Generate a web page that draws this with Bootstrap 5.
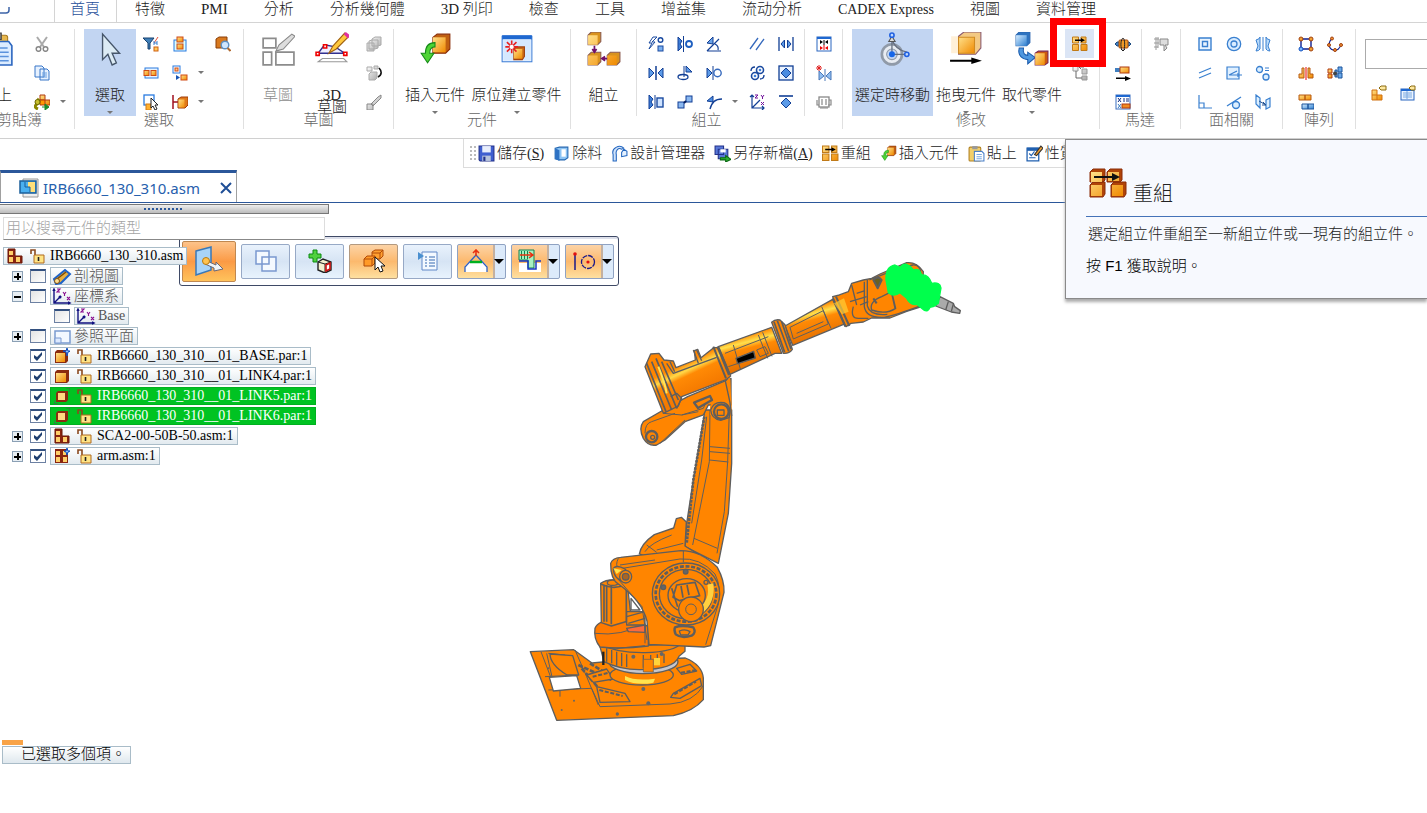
<!DOCTYPE html>
<html lang="zh-Hant">
<head>
<meta charset="utf-8">
<meta name="viewport" content="width=device-width, initial-scale=1">
<title>IRB6660_130_310.asm</title>
<link href="https://cdn.jsdelivr.net/npm/bootstrap@5.3.0/dist/css/bootstrap.min.css" rel="stylesheet">
<style>
body{font-family:"Liberation Serif","Noto Sans CJK TC",serif;font-size:15px;line-height:18px;font-weight:300;color:#222;background:#fff;overflow:hidden}
button{font:inherit;color:inherit;background:none;border:0;padding:0}
svg{display:block;flex:none}
.latin{font-size:14px;font-weight:400}
/* ribbon tabs */
.rtabs{height:23px;border-bottom:1px solid #d4d4d4}
.rtabs .nav-link{padding:0 18px 4px;color:#222;line-height:19px;white-space:nowrap}
.rtabs .nav-link.active{padding:0 16px 4px 15px;color:#1f4e9a;background:#fff;border:solid #d4d4d4;border-width:0 1px}
.appbtn{width:54px}
/* ribbon */
.ribbon{height:116px;padding-top:6px;border-bottom:1px solid #d0d0d0}
.rgroup{border-right:1px solid #e0e0e0;height:100px;display:flex;flex-direction:column;flex:none}
.rbody{height:87px;display:flex}
.rlabel{margin-top:-4px;line-height:16px;text-align:center;color:#666}
.rclip{margin-left:-35px;width:110px}
.rlast{min-width:0;overflow:hidden}
.big{width:66px;height:87px;display:flex;flex-direction:column;align-items:center;white-space:nowrap;flex:none}
.big svg.pic{width:34px;height:34px;margin-top:3px}
.big span{margin-top:20px;line-height:18px}
.big .two{line-height:12px;margin-top:23px}
.big .dd{margin-top:7px}
.big.narrow{width:52px}.big.mid{width:54px}.big.wide{width:97px}.big.move{width:81px}
.big.on{background:#c2d5f2}
.off{color:#8c8c8c}
.off svg{filter:grayscale(1)}
.dd{width:0;height:0;border:3px solid transparent;border-top-color:#777;border-bottom-width:0;display:block}
.igrid{display:grid;grid-auto-flow:column;grid-template-rows:repeat(3,29px);grid-auto-columns:29px}
.igrid.arrows{grid-auto-columns:14px}
.igrid button{display:grid;place-items:center}
.igrid svg{width:16px;height:16px}
.shortsep{border-right:1px solid #e0e0e0;margin-right:4px}
.hot{background:#dbe5f5;position:relative}
.redmark{position:absolute;left:-15px;top:-11px;width:56px;height:49px;border:7px solid #f00;pointer-events:none}
.finder{width:calc(100% - 9px);height:30px;border:1px solid #ababab;border-right:0;margin:10px 0 9px 9px;border-radius:0}
/* quick toolbar */
.qrow{height:31px}
.qbar{margin-left:463px;height:29px;border:solid #dcdcdc;border-width:0 0 1px 1px;gap:9px;padding-left:9px}
.qbar button{display:flex;align-items:center;gap:2px;white-space:nowrap}
.qbar svg{width:17px;height:17px}
.grip{width:7px;height:17px;margin-right:-7px;margin-left:-4px;background:radial-gradient(circle,#bbb 1px,transparent 1px) 0 0/4px 4px}
/* help tip */
.tip{right:0;top:0;width:362px;height:160px;z-index:5;background:#f7f9fe;border:1px solid #8a8a8a;border-right:0;padding:28px 0 0 20px;box-shadow:0 3px 3px #aaa}
.tip h2{font-size:20px;line-height:24px;font-weight:300;margin:0;padding:14px 0 8px 6px}
.tip .head{border-bottom:1px solid #4472b8;height:49px;padding-left:3px}
.tip p{margin:0;line-height:18px}
.tip .desc{padding:8px 0 0 2px;white-space:nowrap}
.tip .f1{padding-top:14px;color:#000;font-family:"Liberation Sans","Noto Sans CJK TC",sans-serif}
.tip .f1 span{font-weight:400}
/* document tab */
.docs{height:33px;border-bottom:1px solid #2b579a}
.doctab{width:237px;border-top:3px solid #2b579a;border-right:1px solid #a0a0a0;border-left:1px solid #a0a0a0;padding:0 4px 0 18px;font-family:"Noto Sans",sans-serif;font-weight:400}
.doctab a{color:#2660ad;text-decoration:none}
/* workspace */
.work{min-height:calc(100vh - 203px)}
.pane{width:329px;z-index:2}
.bar{height:10px;margin-top:1px;background:linear-gradient(#eee,#bcbcbc);border:solid #777;border-width:1px 1px 1px 0;display:grid;place-items:center}
.bar i{width:40px;height:2px;background:repeating-linear-gradient(90deg,#2b579a 0 2px,transparent 2px 4px)}
.find{width:322px;height:23px;margin:3px 0 0 3px;border:1px solid #ddd;border-bottom-color:#888;padding:0 2px;line-height:20px;background:#fff;font-weight:300}
.find::placeholder{color:#a4a4a4;opacity:1}
.tree{list-style:none;margin:6px 0 0;padding:0}
.tree li{height:20px;display:flex;align-items:center}
.tag{height:18px;border:1px solid #a9bcc8;background:linear-gradient(#fff,#e2eaef);display:flex;align-items:center;padding:0 3px;color:#000;font-size:14px;font-weight:400;white-space:nowrap}
.tag svg{width:16px;height:16px}
.tag .lk{margin:0 5px 0 6px}
.tag.cj{font-size:15px;font-weight:300;padding-left:1px;color:#555}
.tag.cj svg{width:20px;height:17px;margin-right:2px}
.tag.root{margin-left:3px}
.tag.sel{background:#00c322;border-color:#00b020;color:#fff}
.exp{width:11px;height:11px;margin-left:12px;margin-right:7px;border:1px solid #8ba0b5;background:#e8eef3;position:relative;flex:none}
.exp::before,.exp.plus::after{content:"";position:absolute;left:1px;top:4px;width:7px;height:2px;background:#000}
.exp.plus::after{left:4px;top:1px;width:2px;height:7px}
.noexp{width:30px;flex:none}
.noexp.deep{width:54px}
.tree input{appearance:none;width:16px;height:14px;margin:0 4px 0 0;border:1px solid #6c80a2;border-top:2px solid #33507f;background:linear-gradient(135deg,#e4e4e4,#fff);flex:none}
.tree input:checked{background:#fff url("data:image/svg+xml,%3Csvg xmlns='http://www.w3.org/2000/svg' viewBox='0 0 14 11'%3E%3Cpath d='M3 4v3l3 3 5-6V1L6 6z' fill='%231e3f70'/%3E%3C/svg%3E") center/14px 11px no-repeat}
.status{margin-bottom:49px;width:129px;margin-left:2px}
.status i{display:block;width:21px;height:5px;background:#f9a347;margin-bottom:1px}
.status output{display:block;height:18px;line-height:14px;border:1px solid #a9bcc8;background:linear-gradient(#fff,#dfe8ee);color:#000;padding-left:18px;white-space:nowrap}
/* floating command bar */
.cmd{left:179px;top:33px;height:50px;border:1px solid #3f4a66;border-radius:3px;background:#fff;box-shadow:inset 0 2px #dcdfea;padding:0 4px 0 2px;display:flex;align-items:center;gap:5px;z-index:1}
.cmd button{width:49px;height:35px;border:1px solid #97a9c6;border-radius:2px;background:linear-gradient(#e9f2fc,#d6e4f4 50%,#e8f3fd);display:flex;align-items:center;justify-content:center}
.cmd button.act{width:54px;height:41px;border-color:#c08850;background:linear-gradient(#fdc38a,#fb9a45 50%,#ffc35c)}
.cmd button.warm{background:linear-gradient(#fcd3a6,#fcb96d 50%,#fee0a0);border-color:#b39a80}
.cmd button.split{border-color:#8fa2c2;justify-content:space-between;padding:0 1px 0 6px;background:linear-gradient(90deg,transparent 35px,#c3b0a0 35px 37px,#dceafa 37px),linear-gradient(#fcd3a6,#fcb96d 50%,#fee0a0)}
.cmd svg{width:24px;height:24px}
.cmd .tri{border:5px solid transparent;border-top-color:#000;border-bottom:0}
.cmd .act svg{width:30px;height:30px}
.model{left:520px;top:47px;width:450px;height:480px}
</style>
</head>
<body>
<svg width="0" height="0" class="position-absolute" aria-hidden="true">
<defs>
<linearGradient id="go" x1="0" y1="0" x2="1" y2="1"><stop offset="0" stop-color="#ffe08a"/><stop offset="1" stop-color="#f08a00"/></linearGradient>
<linearGradient id="gb" x1="0" y1="0" x2="1" y2="1"><stop offset="0" stop-color="#d5ecff"/><stop offset="1" stop-color="#2d7fd0"/></linearGradient>
<linearGradient id="gg" x1="0" y1="0" x2="1" y2="1"><stop offset="0" stop-color="#fff"/><stop offset="1" stop-color="#a8a8a8"/></linearGradient>
</defs>
<symbol id="i-paste" viewBox="0 0 32 32"><rect x="2" y="3" width="24" height="25" rx="2" fill="#e8b84e" stroke="#a87a20"/><path d="M8 1h12v6H8z" fill="#888" stroke="#444"/><path d="M14 9h13l3 4v18H14z" fill="#dcecff" stroke="#2b66c0" stroke-width="1.500"/><path d="M17 15h9m-9 4h10m-10 4h10m-10 4h10" stroke="#5b92dc" stroke-width="1.500"/></symbol>
<symbol id="i-cut" viewBox="0 0 16 16"><path d="M3 1l7 10M13 1L6 11" stroke="#aaa" stroke-width="2"/><g fill="none" stroke="#888" stroke-width="1.500"><circle cx="4.500" cy="13" r="2.300"/><circle cx="11.500" cy="13" r="2.300"/></g></symbol>
<symbol id="i-copy" viewBox="0 0 16 16"><g fill="#e6f1ff" stroke="#3876c8"><path d="M1 1h7l2 2v9H1zM6 4h7l2 2v9H6z"/></g><path d="M8 8h5m-5 2h5m-5 2h5" stroke="#6aa0e0"/></symbol>
<symbol id="i-plink" viewBox="0 0 16 16"><path d="M6 1h5v5h5v5h-6V6H6z" fill="url(#go)" stroke="#b03a10"/><path d="M6 6h5v5H6z" fill="#f90" stroke="#b03a10"/><path d="M3 5q4 2 0 5t1 5" fill="none" stroke="#8a8600" stroke-width="3"/><circle cx="3.500" cy="8" r="2.500" fill="#c8c030" stroke="#6a6600"/><path d="M8 13h4M11 10l4 3-4 3z" stroke="#1a8a2a" fill="#1a8a2a"/></symbol>
<symbol id="i-arrow" viewBox="0 0 32 32"><path d="M9 2v24l5-5 4 10 4-2-4-9h7z" fill="#dcebf4" stroke="#46566a" stroke-width="1.300"/></symbol>
<symbol id="i-filter" viewBox="0 0 16 16"><path d="M0 2h11L7 7v6H5V7z" fill="#3f7fb8" stroke="#17406e"/><path d="M15 1l-4 6" stroke="#e0503a"/><path d="M11 5v4m3-4v4m-3-2h3" stroke="#3a80d0"/><rect x="11" y="11" width="4" height="4" fill="#ffc95c" stroke="#d06010"/></symbol>
<symbol id="i-selv" viewBox="0 0 16 16"><rect x="2" y="4" width="12" height="11" fill="#dff" stroke="#2a7be0"/><g fill="url(#go)" stroke="#d04a14"><rect x="5" y="1" width="6" height="5"/><rect x="5" y="8" width="6" height="5"/></g></symbol>
<symbol id="i-selh" viewBox="0 0 16 16"><rect x="2" y="3" width="13" height="10" fill="#e9f4ff" stroke="#2a7be0"/><g fill="url(#go)" stroke="#d04a14"><rect x="1" y="5.500" width="5" height="5"/><rect x="8" y="5.500" width="5" height="5"/></g></symbol>
<symbol id="i-seln" viewBox="0 0 16 16"><rect x="1" y="1" width="7" height="7" fill="#fff" stroke="#2a7be0"/><rect x="3" y="3" width="3" height="3" fill="#fc8" stroke="#d04a14"/><rect x="9" y="10" width="6" height="5" fill="url(#go)" stroke="#d04a14"/><path d="M4 10l4 2.500L4 15z" fill="#1755b5"/></symbol>
<symbol id="i-selc" viewBox="0 0 16 16"><rect x="1" y="1" width="10" height="10" fill="#fff" stroke="#2a7be0" stroke-width="1.300"/><rect x="3" y="10" width="5" height="6" fill="#ffb030" stroke="#d07a14"/><path d="M8 4v10l2-2 2 4 2-1-2-4h3z" fill="#fff" stroke="#222"/></symbol>
<symbol id="i-selp" viewBox="0 0 16 16"><path d="M1 1v14M1 8h5" stroke="#a01020" stroke-width="1.500"/><path d="M6 5l3-2h7v8l-3 3H6z" fill="#e07818" stroke="#a03c08"/><rect x="6.500" y="5.500" width="6" height="8" fill="url(#go)"/></symbol>
<symbol id="i-look" viewBox="0 0 16 16"><path d="M1 3l3-2h8v8l-3 3H1z" fill="#d8791e" stroke="#8a3e08"/><circle cx="10" cy="9" r="3.800" fill="#cfe6ff" stroke="#5b8fc4" stroke-width="1.400"/><path d="M12.500 12l3 3" stroke="#b06a30" stroke-width="2"/></symbol>
<symbol id="i-sk" viewBox="0 0 32 32"><g fill="none" stroke="#8c8c8c" stroke-width="1.600"><path d="M2 6h12v9H2zM2 19h8v12H2zM14 19h17v12H14z"/></g><path d="M14 18l3-6L29 2l3 2-11 12z" fill="#ddd" stroke="#888"/></symbol>
<symbol id="i-sk3" viewBox="0 0 32 32"><path d="M3 20l6-8 10 2 9 6z" fill="#eef" stroke="#303090" stroke-width="1.300"/><path d="M13 20l4-7L28 1l4 3-12 12z" fill="#ffc83c" stroke="#a06010"/><path d="M27 2l2-2 4 3-2 3z" fill="#e030a0"/><path d="M7 25h20l3 3H3z" fill="#fff" stroke="#999"/><g fill="#fff" stroke="#e00" stroke-width="1.500"><path d="M1 19h3v3H1zM8 12h3v3H8zM27 19h3v3h-3z"/></g></symbol>
<symbol id="i-g1" viewBox="0 0 16 16"><g fill="url(#gg)" stroke="#aaa"><path d="M6 3l3-2h6v8l-3 1H6zM3 5l3-1h6v8l-3 1H3zM1 7h7v8H1z"/></g></symbol>
<symbol id="i-g2" viewBox="0 0 16 16"><path d="M1 2h5v4H1zM8 1h4v3H8zM3 9l2-2h6v6l-2 2H3z" fill="url(#gg)" stroke="#aaa"/><path d="M13 3c3 3 3 7-1 9" fill="none" stroke="#111" stroke-width="1.600"/></symbol>
<symbol id="i-g3" viewBox="0 0 16 16"><path d="M1 10h6v6H1zM5 10l7-7 3-2v3l-8 8z" fill="url(#gg)" stroke="#888"/></symbol>
<symbol id="i-ins" viewBox="0 0 32 32"><path d="M14 5l4-3h12v14l-4 4H14z" fill="#c06010" stroke="#8a2e08"/><path d="M14 5h12v14H14z" fill="url(#go)"/><path d="M16 10C9 10 7 14 7 20H3l6 9 6-9h-4c0-4 1-6 5-6z" fill="#4ed435" stroke="#168a18"/></symbol>
<symbol id="i-new" viewBox="0 0 32 32"><rect x="2" y="4" width="28" height="24" fill="#fff" stroke="#3f7fd8"/><path d="M2 3h28v4H2z" fill="#1f68d0"/><rect x="3" y="7" width="26" height="20" fill="#d5e8ff"/><path d="M13 16l2-2h8v9l-2 3h-8z" fill="#c86818" stroke="#a04010"/><path d="M13 16h8v9h-8z" fill="url(#go)"/><path d="M11 8v12M5 14h12M6.500 9.500l9 9M15.500 9.500l-9 9" stroke="#e82020" stroke-width="1.500"/><circle cx="11" cy="14" r="2" fill="#fff"/></symbol>
<symbol id="i-asm" viewBox="0 0 32 32"><g fill="#d8921e" stroke="#8a5a50"><path d="M1 3l3-3h9v9l-3 3H1zM1 22l3-3h9v9l-3 3H1zM19 22l3-3h9v9l-3 3h-9z"/></g><path d="M1 3h9v9H1zM1 22h9v9H1zM19 22h9v9h-9z" fill="url(#go)"/><path d="M7 13v5M5 16l2 3 2-3M14 25h5M17 23l-3 2 3 2" stroke="#70106a" stroke-width="1.600" fill="none"/></symbol>
<symbol id="a1" viewBox="0 0 16 16"><path d="M5 1L1 7h3l-3 6 6-7H4l5-5z" fill="#fff" stroke="#1a4aa0"/><circle cx="12.500" cy="4" r="2.300" fill="#fff" stroke="#1a4aa0" stroke-width="1.400"/><rect x="10" y="10" width="5" height="5" fill="#7ab0f0" stroke="#1a4aa0"/></symbol>
<symbol id="a2" viewBox="0 0 16 16"><path d="M1 1l4 4-2 3 2 3-4 4z" fill="#3f7fd8" stroke="#123f95"/><path d="M6.500 0v16" stroke="#123f95"/><circle cx="12" cy="8" r="3" fill="#fff" stroke="#1f5fc0" stroke-width="1.800"/></symbol>
<symbol id="a3" viewBox="0 0 16 16"><path d="M1 7l6-6v7z" fill="#6ba4e8" stroke="#123f95"/><path d="M1 15L13 3M1 15h14M9 8q4 2 3 6" fill="none" stroke="#123f95" stroke-width="1.200"/></symbol>
<symbol id="a4" viewBox="0 0 16 16"><path d="M1 13L9 2m-2 12l8-11" stroke="#3569bd" stroke-width="1.300"/></symbol>
<symbol id="a5" viewBox="0 0 16 16"><path d="M1 1v14M15 1v14" stroke="#123f95" stroke-width="1.300"/><path d="M6.500 4v8L3 8zM9.500 4v8L13 8z" fill="#5c9be8" stroke="#123f95"/></symbol>
<symbol id="b1" viewBox="0 0 16 16"><path d="M1 3v10l5-5zM15 3v10l-5-5z" fill="#5c9be8" stroke="#123f95"/><path d="M8 1v14" stroke="#123f95" stroke-width="1.500"/></symbol>
<symbol id="b2" viewBox="0 0 16 16"><path d="M7 1v11M9 1v6h6z" fill="#5c9be8" stroke="#123f95"/><ellipse cx="6" cy="12" rx="5" ry="2.500" fill="none" stroke="#123f95" stroke-width="1.300"/></symbol>
<symbol id="b3" viewBox="0 0 16 16"><path d="M1 3v10l5-5z" fill="#5c9be8" stroke="#123f95"/><path d="M7 1v14" stroke="#123f95"/><circle cx="11.500" cy="8" r="3.700" fill="none" stroke="#3569bd" stroke-width="1.400"/></symbol>
<symbol id="b4" viewBox="0 0 16 16"><g fill="#fff" stroke="#1a4aa0" stroke-width="1.600"><circle cx="11" cy="5" r="3.500"/><circle cx="6" cy="11" r="3.500"/></g><g fill="#3f7fd8"><circle cx="11" cy="5" r="1.300"/><circle cx="6" cy="11" r="1.300"/></g><path d="M2 6q0-4 4-4M15 10q0 4-4 4" fill="none" stroke="#123f95" stroke-width="1.300"/></symbol>
<symbol id="b5" viewBox="0 0 16 16"><rect x="1" y="1" width="14" height="14" fill="#eaf3ff" stroke="#123f95" stroke-width="1.300"/><path d="M8 3l5 5-5 5-5-5z" fill="#4a8ce0" stroke="#123f95"/></symbol>
<symbol id="c1" viewBox="0 0 16 16"><path d="M1 1l4 4-2 3 2 3-4 4z" fill="#3f7fd8" stroke="#123f95"/><path d="M7 1v14" stroke="#123f95"/><rect x="9" y="4" width="6" height="9" fill="#cfe3ff" stroke="#1a4aa0" stroke-width="1.400"/></symbol>
<symbol id="c2" viewBox="0 0 16 16"><rect x="1" y="8" width="6" height="6" fill="#8ab8f0" stroke="#123f95"/><rect x="9" y="2" width="6" height="6" fill="#8ab8f0" stroke="#123f95"/><path d="M7 9l2-2" stroke="#001c60" stroke-width="2"/></symbol>
<symbol id="c3" viewBox="0 0 16 16"><path d="M1 7l6-5v6z" fill="#4a8ce0" stroke="#123f95"/><path d="M4 15C6 8 9 5 16 5" fill="none" stroke="#123f95" stroke-width="1.400"/></symbol>
<symbol id="c4" viewBox="0 0 16 16"><path d="M3 1v13h12M3 14l8-8M1 3l2-2 2 2M13 12l2 2-2 2" fill="none" stroke="#123f95" stroke-width="1.200"/><path d="M6 1h3L6 4h3M12 1l1.500 2L15 1m-1.500 2v2M12 8l3 3m0-3l-3 3" stroke="#70109a" fill="none"/></symbol>
<symbol id="c5" viewBox="0 0 16 16"><path d="M1 2h14" stroke="#123f95" stroke-width="1.600"/><path d="M8 4l5 5-5 5-5-5z" fill="#5c9be8" stroke="#123f95"/></symbol>
<symbol id="d1" viewBox="0 0 16 16"><rect x="1" y="1" width="14" height="14" fill="#fff" stroke="#2a66c0"/><path d="M1 2h14" stroke="#1f68d0" stroke-width="2"/><path d="M4 4v4l3-2zM12 4v4L9 6z" fill="#000"/><path d="M4 10v4l3-2zM12 10v4l-3-2z" fill="#e00"/><path d="M8 4v5" stroke="#000"/><path d="M8 9v5" stroke="#e00"/></symbol>
<symbol id="d2" viewBox="0 0 16 16"><path d="M3 6v9l5-4zM15 6v9l-5-4z" fill="#8fbdf0" stroke="#4a78b8"/><path d="M9 4v12" stroke="#4a78b8"/><path d="M3 0v6M0 3h6M1 1l4 4M5 1L1 5" stroke="#e02020"/></symbol>
<symbol id="d3" viewBox="0 0 16 16"><rect x="3" y="3" width="10" height="10" fill="none" stroke="#888" stroke-width="1.300"/><path d="M6 5v6M10 5v6M1 6v5h2m10-5h2v5h-3M4 14h8" stroke="#888" fill="none" stroke-width="1.200"/></symbol>
<symbol id="i-move" viewBox="0 0 32 32"><circle cx="15" cy="21" r="9.500" fill="#e8ecf2" stroke="#909aa8" stroke-width="2.500"/><circle cx="15" cy="21" r="5" fill="#c2d5f2" stroke="#909aa8"/><path d="M15 21V3m0 18h14M15 6q2 10 14 13" fill="none" stroke="#666f80" stroke-width="1.200"/><path d="M12 9l3-5 3 5z" fill="#ddd" stroke="#555"/><g fill="#bcd8ff" stroke="#2060e0" stroke-width="1.500"><circle cx="15" cy="3" r="2"/><circle cx="29" cy="21" r="2"/></g><circle cx="15" cy="21" r="2.800" fill="#1666e8"/></symbol>
<symbol id="i-drag" viewBox="0 0 32 32"><path d="M2 4h10v16H2z" fill="#fff0d8"/><path d="M9 4l5-4h16v15l-5 6H9z" fill="#f3c983" stroke="#8a5a70"/><path d="M9 5h15v15H9z" fill="url(#go)" stroke="#d08a20"/><path d="M1 26h20v-2l10 3-10 3v-2H1z" fill="#000"/></symbol>
<symbol id="i-rep" viewBox="0 0 32 32"><path d="M1 3l3-3h10v10l-3 3H1z" fill="#2f74c0" stroke="#2a66b0"/><path d="M1 3h10v10H1z" fill="url(#gb)"/><path d="M4 15c-2 8 4 11 8 11v4l7-6-7-5v3c-3 0-5-2-4-7z" fill="#4f98e0" stroke="#1b5cad"/><path d="M19 20l3-2h9v11l-3 2h-9z" fill="#cc5a10" stroke="#7a2450"/><path d="M19 20h9v11h-9z" fill="url(#go)"/></symbol>
<symbol id="i-re" viewBox="0 0 16 16"><g fill="url(#go)" stroke="#c07a18"><path d="M.5 1h6v6h-6zM9 1h5v6H9zM.5 8.500h6v6h-6zM9 8.500h6v6H9z"/></g><path d="M3 3.500h6V2l4 2.200L9 6.300V5H3z" fill="#000"/></symbol>
<symbol id="i-re2" viewBox="0 0 38 30"><g fill="#b04408" stroke="#8a2c08" stroke-linejoin="round"><path d="M1 4l3-3h12v11l-2 2H1zM18 4l3-3h12v11l-2 2H18zM1 17l3-3h12v12l-2 3H1zM22 17l3-3h12v12l-2 3H22z"/></g><g fill="url(#go)"><path d="M2 4h11v10H2zM19 4h11v9H19zM2 17h11v11H2zM23 17h11v11H23z"/></g><path d="M5 8h18V5l8 4-8 4v-3H5z" fill="#111"/></symbol>
<symbol id="i-tr" viewBox="0 0 16 16"><path d="M1 1h5v5H1zM10 4h5v5h-5zM10 11h5v4h-5z" fill="url(#gg)" stroke="#999"/><path d="M4 6v7h6M7 2h5m-3-2L7 2l2 2" fill="none" stroke="#666"/></symbol>
<symbol id="m1" viewBox="0 0 16 16"><path d="M0 8l2-2h12l2 2-2 2H2z" fill="#3f7fc0" stroke="#1c4a80"/><rect x="4" y="4" width="9" height="8" rx="1" fill="#f09a28" stroke="#a84a08"/><path d="M7 14c-2-4-1-11 1-12 2 1 2 8 1 12m-3-1l2 2 2-2" fill="none" stroke="#222"/></symbol>
<symbol id="m2" viewBox="0 0 16 16"><rect x="0" y="3" width="6" height="4" fill="#3f7fc0"/><rect x="5" y="2" width="9" height="6" fill="url(#go)" stroke="#b03a10"/><path d="M1 12.500h9V11l6 2.500-6 2.500v-2H1z" fill="#000"/></symbol>
<symbol id="m3" viewBox="0 0 16 16"><rect x="1" y="1" width="14" height="14" fill="#fff" stroke="#3a6ec0"/><path d="M1 2h14" stroke="#1f68d0" stroke-width="2"/><path d="M3 4l3 4m0-4L3 8m6-4v4M11 5h3m-3 2h3" stroke="#102c80"/><rect x="7" y="10" width="8" height="4" fill="#f08a20" stroke="#b03a10"/><path d="M3 10l3 4m0-4l-3 4" stroke="#3f7fc0"/></symbol>
<symbol id="m4" viewBox="0 0 16 16"><path d="M7 3h8v6h-3l2 3-3 3V9H7z" fill="#ddd" stroke="#888"/><path d="M1 3h5M1 7h5M3 1v13M1 11h4M5 1v11" stroke="#999" fill="none"/></symbol>
<symbol id="f1" viewBox="0 0 16 16"><g fill="#e9f4ff" stroke="#3a80d0" stroke-width="1.400"><path d="M2 2h12v12H2zM5.500 5.500h5v5h-5z"/></g></symbol>
<symbol id="f2" viewBox="0 0 16 16"><g fill="#d9ecff" stroke="#3a80d0" stroke-width="1.300"><circle cx="8" cy="8" r="6.700"/><circle cx="8" cy="8" r="3"/></g></symbol>
<symbol id="f3" viewBox="0 0 16 16"><path d="M1 4q4-1 4-3v12q-1 2-4 2l2-5zM15 4q-4-1-4-3v12q1 2 4 2l-2-5z" fill="#b8dafa" stroke="#3a80d0"/><path d="M8 1v14" stroke="#3a80d0"/></symbol>
<symbol id="f4" viewBox="0 0 16 16"><path d="M2 8l12-5M2 13l12-5" stroke="#3a80d0" stroke-width="1.300"/></symbol>
<symbol id="f5" viewBox="0 0 16 16"><path d="M1 2h12v12H1z" fill="#e0f0ff" stroke="#3a80d0" stroke-width="1.200"/><path d="M3 10l8-4M3 10h13M12 8v4" stroke="#3a80d0" stroke-width="1.200"/></symbol>
<symbol id="f6" viewBox="0 0 16 16"><g fill="#dcefff" stroke="#3a80d0" stroke-width="1.300"><circle cx="4.500" cy="4.500" r="3"/><circle cx="11" cy="12" r="3"/></g><path d="M10 3h4m-4 2.500h4" stroke="#3a80d0"/></symbol>
<symbol id="f7" viewBox="0 0 16 16"><path d="M2 1v13h13M2 9h5v5" stroke="#3a80d0" stroke-width="1.200" fill="none"/></symbol>
<symbol id="f8" viewBox="0 0 16 16"><circle cx="10" cy="11" r="3.500" fill="#dcefff" stroke="#3a80d0" stroke-width="1.400"/><path d="M1 12L15 3" stroke="#3a80d0" stroke-width="1.400"/></symbol>
<symbol id="f9" viewBox="0 0 16 16"><path d="M1 1l4 3v10l-4-4zM11 6l4-2v9l-4 2z" fill="#dcefff" stroke="#3a80d0" stroke-width="1.200"/><path d="M4 7l7 4-3-3m3 3H7" stroke="#205090" fill="none"/></symbol>
<symbol id="p1" viewBox="0 0 16 16"><path d="M3 3h10v10H3z" fill="none" stroke="#102090" stroke-width="1.400"/><g fill="#f0a030" stroke="#a04010"><circle cx="3" cy="3" r="2"/><circle cx="13" cy="3" r="2"/><circle cx="13" cy="13" r="2"/></g><circle cx="3" cy="13" r="2" fill="#7ab8ff" stroke="#1050c0"/></symbol>
<symbol id="p2" viewBox="0 0 16 16"><path d="M6 2C1 5 1 12 6 14c4 1 7-1 8-6" fill="none" stroke="#102090" stroke-width="1.200"/><g fill="#f09030" stroke="#a04010"><circle cx="5" cy="2.500" r="1.500"/><circle cx="2" cy="9" r="1.500"/><circle cx="8" cy="14" r="1.500"/><circle cx="14" cy="9" r="1.500"/></g></symbol>
<symbol id="p3" viewBox="0 0 16 16"><path d="M4 3h2v10H1V9h3zM10 3h2v6h3v4h-5z" fill="url(#go)" stroke="#b85a10"/><path d="M8 2v13" stroke="#e00"/></symbol>
<symbol id="p4" viewBox="0 0 16 16"><path d="M1 4h4v4H1zM1 9h4v4H1z" fill="url(#go)" stroke="#b03a10"/><path d="M11 2h4v5h-4zM11 8h4v5h-4zM8 5h2v7H8z" fill="#69a8e8" stroke="#1c559c"/><circle cx="8" cy="8.500" r="2" fill="#444"/></symbol>
<symbol id="p5" viewBox="0 0 16 16"><path d="M1 1h6v5H1zM7 1h6v5H7z" fill="url(#go)" stroke="#b85a10"/><path d="M4 10h6v5H4zM10 10h6v5h-6z" fill="url(#gb)" stroke="#1c559c"/></symbol>
<symbol id="q1" viewBox="0 0 16 16"><path d="M1 5h5v5h5v5H1z" fill="url(#go)" stroke="#d07010"/><path d="M1 10h5v5" fill="none" stroke="#d07010"/><path d="M8 3l2-2h5v4h-5z" fill="#ffe9a0" stroke="#8a6a10"/></symbol>
<symbol id="q2" viewBox="0 0 16 16"><rect x="1" y="4" width="13" height="11" fill="#eaf4ff" stroke="#2a66c0"/><path d="M1 5h13" stroke="#1f68d0" stroke-width="2"/><path d="M3 8h9m-9 2h9m-9 2h9M7 6v8" stroke="#7aa8e0"/><path d="M9 3l2-2h4v4h-4z" fill="#ffe9a0" stroke="#8a6a10"/></symbol>
<symbol id="i-save" viewBox="0 0 16 16"><path d="M1 1h14v14H2l-1-1z" fill="#3f5fd0" stroke="#22318a"/><path d="M4 1h8v6H4z" fill="#e8eefc"/><path d="M4 10h8v5H4z" fill="#b8c4dc"/><path d="M5 11h2v4H5z" fill="#22318a"/></symbol>
<symbol id="i-cuto" viewBox="0 0 16 16"><path d="M2 3l4-1h8v10l-3 2H6l-4-1z" fill="#8cc4f4" stroke="#2467b0"/><path d="M8 4h4v7H8z" fill="#fff"/><path d="M2 3l4 2v10l-4-2z" fill="#2e72c4"/></symbol>
<symbol id="i-dm" viewBox="0 0 16 16"><path d="M2 9C0 3 8-1 12 3l-2 1C7 2 4 5 5 9v6H2z" fill="#cfe2fa" stroke="#2467c0"/><path d="M12 4l3 2v4l-5 1V7z" fill="#e6f2ff" stroke="#2467c0"/></symbol>
<symbol id="i-sa" viewBox="0 0 16 16"><path d="M1 1h8v8H1zM4 4h9v9H4z" fill="#5878d8" stroke="#22318a"/><path d="M6 4h5v3H6z" fill="#fff"/><path d="M6 12h5v-2l5 3.500L11 16v-2H6z" fill="#2fb030" stroke="#0b6a14"/></symbol>
<symbol id="i-cb" viewBox="0 0 16 16"><rect x="1" y="2" width="11" height="13" rx="1" fill="#f2cf6a" stroke="#b08020"/><path d="M4 1h5v3H4z" fill="#999"/><path d="M6 6h7l2 2v7H6z" fill="#fff" stroke="#4a80c8"/><path d="M8 9h5m-5 2h5m-5 2h5" stroke="#7aa8e0"/></symbol>
<symbol id="i-prop" viewBox="0 0 16 16"><path d="M1 3h11v12H1z" fill="#fff" stroke="#2060b0" stroke-width="1.200"/><path d="M1 4h11" stroke="#2060b0" stroke-width="3"/><path d="M3 8l2 2 3-4M3 12h6" stroke="#2060b0" fill="none"/><path d="M8 9l6-8 2 2-6 7z" fill="#f0a030" stroke="#333"/></symbol>
<symbol id="t-asm" viewBox="0 0 16 16"><path d="M1 1h7v7h7v7H1z" fill="#8a2410" stroke="#6a1606"/><path d="M2 3h4v4H2zM2 9h4v5H2zM9 9h4v5H9z" fill="#ffcf6a"/></symbol>
<symbol id="t-lock" viewBox="0 0 16 16"><path d="M2 6V2h4v5" fill="none" stroke="#8a4a20" stroke-width="1.600"/><path d="M5 7h10v8H5z" fill="#ffe484" stroke="#b06a20"/><path d="M9.500 9v4" stroke="#222" stroke-width="1.600"/></symbol>
<symbol id="t-part" viewBox="0 0 16 16"><path d="M1 4l2-2h12v11l-2 2H1z" fill="#8a2c10"/><path d="M2 5h10v9H2z" fill="url(#go)"/></symbol>
<symbol id="t-psel" viewBox="0 0 16 16"><path d="M0 12v4h4M12 0h4v4" fill="none" stroke="#555"/><path d="M2 5l2-2h10v9l-2 2H2z" fill="#8a2c10"/><path d="M4 5h7v7H4z" fill="#ffd980"/></symbol>
<symbol id="t-base" viewBox="0 0 16 16"><path d="M1 4l2-2h11v11l-2 2H1z" fill="#8a2c10"/><path d="M2 5h9v9H2z" fill="url(#go)"/><path d="M13 0l1 3h3l-3 1-1 4-1-4-3-1h3z" fill="#90c0ff" stroke="#1050c0"/></symbol>
<symbol id="t-asb" viewBox="0 0 16 16"><path d="M1 1h13v14H1z" fill="#8a2410"/><path d="M2 3h4v4H2zM2 9h4v5H2zM9 9h4v5H9zM9 3h3v4H9z" fill="#ffcf6a"/><path d="M13 0l1 3h2l-2 1-1 3-1-3-2-1h2z" fill="#90c0ff" stroke="#1050c0"/></symbol>
<symbol id="t-sec" viewBox="0 0 20 17"><path d="M2 11L13 2l5 4-9 9-5 1z" fill="#e8b040" stroke="#1d62c8" stroke-width="2"/><path d="M5 11l9-7" stroke="#7a4a08" stroke-width="1.500"/><ellipse cx="5" cy="13" rx="2.500" ry="2.500" fill="#ffdf90" stroke="#805010"/></symbol>
<symbol id="t-cs" viewBox="0 0 20 17"><path d="M2 1v14h16M2 15l7-7M1 3l1-2 1 2M16 14l2 1-2 1" fill="none" stroke="#101080" stroke-width="1.400"/><circle cx="8" cy="9" r="1.500" fill="#101080"/><path d="M5 1h3L5 4h3M11 4l1.500 2L14 4m-1.500 2v2M15 9l3 3m0-3l-3 3" stroke="#8a1090" fill="none" stroke-width="1.100"/></symbol>
<symbol id="t-pl" viewBox="0 0 20 17"><path d="M3 3h15v12H3z" fill="#f2f8ff" stroke="#7a9ad0" stroke-width="1.500"/><path d="M3 10h6v5H3z" fill="#dceaff" stroke="#7a9ad0"/></symbol>
<symbol id="k1" viewBox="0 0 30 30"><path d="M2 5l15-4v23L2 29z" fill="#a8d4f8" stroke="#3878b8" stroke-width="1.500"/><path d="M13 15l9 4v-3l7 7-9 2v-3l-9-4z" fill="#f0f4f8" stroke="#667"/><circle cx="12" cy="15" r="3.500" fill="#ffc350" stroke="#b87a10"/></symbol>
<symbol id="k2" viewBox="0 0 24 24"><g fill="#f4f9ff" stroke="#7a98d0" stroke-width="1.500"><path d="M2 2h13v13H2zM8 8h14v14H8z"/></g></symbol>
<symbol id="k3" viewBox="0 0 24 24"><path d="M5 1h4v4h4v4H9v4H5V9H1V5h4z" fill="#50d040" stroke="#0a8a10"/><path d="M10 13l5-3 8 3v8l-6 3-7-3z" fill="#f4f0d0" stroke="#222" stroke-width="1.400"/><path d="M10 13l7 2 6-2M17 15v8" fill="none" stroke="#222"/><path d="M18 16v6l4-2v-6z" fill="#fff" stroke="#d01010" stroke-width="1.600"/></symbol>
<symbol id="k4" viewBox="0 0 24 24"><path d="M10 3l3-2h8v6l-3 3h-8z" fill="#ffa030" stroke="#b04a08"/><path d="M10 4h8v6M18 4l3-3" stroke="#b04a08" fill="none"/><path d="M2 10l3-3h8v7l-3 3H2z" fill="#ff9a28" stroke="#b04a08"/><path d="M2 10h8v7M10 10l3-3" stroke="#b04a08" fill="none"/><path d="M13 8v13l3-3 2 5 3-1-2-5h4z" fill="#fff" stroke="#111"/></symbol>
<symbol id="k5" viewBox="0 0 24 24"><path d="M6 3h15v18H6z" fill="#f4f9ff" stroke="#6088c8"/><path d="M2 3l6 4-6 4z" fill="#4a90d0"/><path d="M9 8h2m2 0h6m-10 3h2m2 0h6m-10 3h2m2 0h6m-10 3h2m2 0h6" stroke="#3468b0"/></symbol>
<symbol id="k6" viewBox="0 0 24 24"><path d="M1 23v-6l5-5h12l5 5v6z" fill="#fff"/><path d="M1 23v-5L12 6l11 12v5" fill="none" stroke="#3060c0" stroke-width="1.300"/><path d="M6 13h12" stroke="#00b020" stroke-width="2.500"/><path d="M12 7V1M9 4l3-3 3 3" stroke="#e83010" stroke-width="1.600" fill="none"/></symbol>
<symbol id="k7" viewBox="0 0 24 24"><path d="M1 14h22v9H1z" fill="#fff"/><path d="M1 1h15v18h-6v-8H1z" fill="#a8f0c0" stroke="#108050"/><path d="M1 12h9v8h8v-8h5" fill="none" stroke="#1838c0" stroke-width="1.500"/><path d="M3.500 2v8m3-8v8m3-8v8" stroke="#108050"/><path d="M2 6h12M11 3l4 3-4 3" stroke="#e83010" fill="none" stroke-width="1.500"/></symbol>
<symbol id="k8" viewBox="0 0 24 24"><path d="M3 5v16" stroke="#18188a" stroke-width="1.500"/><circle cx="3" cy="5" r="1.800" fill="#e01010"/><circle cx="16" cy="13" r="6.500" fill="none" stroke="#18188a" stroke-width="1.300" stroke-dasharray="5 1"/><circle cx="16" cy="13" r="1.600" fill="#e01010"/></symbol>
<symbol id="i-doc" viewBox="0 0 20 20"><path d="M4 1h15v18H4z" fill="#eee" stroke="#999"/><path d="M1 3h16v12H1z" fill="#4ab0f0" stroke="#1b5f9a" stroke-width="1.500"/><path d="M9 4h7v10h-5V9H9z" fill="#ffe07a"/><path d="M6 4v5h5v5" fill="none" stroke="#1b5f9a"/></symbol>
</svg>

<header>
<nav class="rtabs nav flex-nowrap" aria-label="功能區">
<button class="appbtn" aria-label="應用程式"><svg width="12" height="8"><path d="M0 6h6q3 0 3-3V0" fill="none" stroke="#3c64a8" stroke-width="1.500"/></svg></button>
<a class="nav-link active" href="#">首頁</a><a class="nav-link" href="#">特徵</a><a class="nav-link fw-normal" href="#">PMI</a><a class="nav-link" href="#">分析</a><a class="nav-link" href="#">分析幾何體</a><a class="nav-link" href="#"><span class="fw-normal">3D</span> 列印</a><a class="nav-link" href="#">檢查</a><a class="nav-link" href="#">工具</a><a class="nav-link" href="#">增益集</a><a class="nav-link" href="#">流动分析</a><a class="nav-link latin" href="#">CADEX Express</a><a class="nav-link" href="#">視圖</a><a class="nav-link" href="#">資料管理</a>
</nav>

<div class="ribbon d-flex">
<section class="rgroup rclip"><div class="rbody" style="padding-left:6px">
<button class="big narrow"><svg class="pic"><use href="#i-paste"/></svg><span>貼上</span></button>
<div class="igrid ms-1"><button aria-label="剪下"><svg><use href="#i-cut"/></svg></button><button aria-label="複製"><svg><use href="#i-copy"/></svg></button><button aria-label="貼上連結"><svg><use href="#i-plink"/></svg></button></div>
<div class="igrid arrows"><i></i><i></i><button aria-label="更多"><b class="dd"></b></button></div>
</div><div class="rlabel">剪貼簿</div></section>

<section class="rgroup" style="width:169px"><div class="rbody" style="padding-left:9px">
<button class="big narrow on"><svg class="pic"><use href="#i-arrow"/></svg><span>選取</span><b class="dd"></b></button>
<div class="igrid"><button aria-label="篩選"><svg><use href="#i-filter"/></svg></button><button aria-label="選取相同"><svg><use href="#i-selh"/></svg></button><button aria-label="框選"><svg><use href="#i-selc"/></svg></button><button aria-label="選取可見"><svg><use href="#i-selv"/></svg></button><button aria-label="選取小件"><svg><use href="#i-seln"/></svg></button><button aria-label="依平面選取"><svg><use href="#i-selp"/></svg></button></div>
<div class="igrid arrows"><i></i><button aria-label="更多"><b class="dd"></b></button><button aria-label="更多"><b class="dd"></b></button></div>
<div class="igrid"><button aria-label="查詢"><svg><use href="#i-look"/></svg></button></div>
</div><div class="rlabel">選取</div></section>

<section class="rgroup" style="width:150px"><div class="rbody" style="padding-left:7px">
<button class="big mid off"><svg class="pic"><use href="#i-sk"/></svg><span>草圖</span></button>
<button class="big mid"><svg class="pic"><use href="#i-sk3"/></svg><span class="two"><b class="fw-normal">3D</b><br>草圖</span></button>
<div class="igrid"><button aria-label="複製草圖"><svg><use href="#i-g1"/></svg></button><button aria-label="轉換草圖"><svg><use href="#i-g2"/></svg></button><button aria-label="編輯草圖"><svg><use href="#i-g3"/></svg></button></div>
</div><div class="rlabel">草圖</div></section>

<section class="rgroup" style="width:177px"><div class="rbody ps-2">
<button class="big"><svg class="pic"><use href="#i-ins"/></svg><span>插入元件</span><b class="dd"></b></button>
<button class="big wide"><svg class="pic"><use href="#i-new"/></svg><span>原位建立零件</span><b class="dd"></b></button>
</div><div class="rlabel">元件</div></section>

<section class="rgroup" style="width:272px"><div class="rbody">
<button class="big shortsep"><svg class="pic"><use href="#i-asm"/></svg><span>組立</span></button>
<div class="igrid"><button aria-label="快速組立"><svg><use href="#a1"/></svg></button><button aria-label="貼合"><svg><use href="#b1"/></svg></button><button aria-label="面對齊"><svg><use href="#c1"/></svg></button><button aria-label="軸對齊"><svg><use href="#a2"/></svg></button><button aria-label="插入關係"><svg><use href="#b2"/></svg></button><button aria-label="連接"><svg><use href="#c2"/></svg></button><button aria-label="角度"><svg><use href="#a3"/></svg></button><button aria-label="相切"><svg><use href="#b3"/></svg></button><button aria-label="路徑"><svg><use href="#c3"/></svg></button></div>
<div class="igrid arrows"><i></i><i></i><button aria-label="更多"><b class="dd"></b></button></div>
<div class="igrid"><button aria-label="平行"><svg><use href="#a4"/></svg></button><button aria-label="齒輪"><svg><use href="#b4"/></svg></button><button aria-label="匹配座標系"><svg><use href="#c4"/></svg></button><button aria-label="置中"><svg><use href="#a5"/></svg></button><button aria-label="剛性"><svg><use href="#b5"/></svg></button><button aria-label="固定"><svg><use href="#c5"/></svg></button></div>
<div class="shortsep ms-1"></div>
<div class="igrid"><button aria-label="關係助手"><svg><use href="#d1"/></svg></button><button aria-label="擷取關係"><svg><use href="#d2"/></svg></button><button aria-label="關係管理"><svg><use href="#d3"/></svg></button></div>
</div><div class="rlabel">組立</div></section>

<section class="rgroup" style="width:257px"><div class="rbody" style="padding-left:9px">
<button class="big move on"><svg class="pic"><use href="#i-move"/></svg><span>選定時移動</span></button>
<button class="big"><svg class="pic"><use href="#i-drag"/></svg><span>拖曳元件</span><b class="dd"></b></button>
<button class="big"><svg class="pic"><use href="#i-rep"/></svg><span>取代零件</span><b class="dd"></b></button>
<div class="igrid"><button class="hot" aria-label="重組"><svg><use href="#i-re"/></svg><i class="redmark"></i></button><button aria-label="轉移"><svg><use href="#i-tr"/></svg></button></div>
</div><div class="rlabel">修改</div></section>

<section class="rgroup" style="width:81px"><div class="rbody ps-2">
<div class="igrid"><button aria-label="旋轉馬達"><svg><use href="#m1"/></svg></button><button aria-label="線性馬達"><svg><use href="#m2"/></svg></button><button aria-label="變數馬達"><svg><use href="#m3"/></svg></button></div>
<div class="shortsep ms-1"></div>
<div class="igrid"><button aria-label="模擬馬達"><svg><use href="#m4"/></svg></button></div>
</div><div class="rlabel">馬達</div></section>

<section class="rgroup" style="width:102px"><div class="rbody" style="padding-left:9px">
<div class="igrid"><button aria-label="共面"><svg><use href="#f1"/></svg></button><button aria-label="平行面"><svg><use href="#f4"/></svg></button><button aria-label="垂直面"><svg><use href="#f7"/></svg></button><button aria-label="同心"><svg><use href="#f2"/></svg></button><button aria-label="水平面"><svg><use href="#f5"/></svg></button><button aria-label="相切面"><svg><use href="#f8"/></svg></button><button aria-label="對稱"><svg><use href="#f3"/></svg></button><button aria-label="等半徑"><svg><use href="#f6"/></svg></button><button aria-label="偏移面"><svg><use href="#f9"/></svg></button></div>
</div><div class="rlabel">面相關</div></section>

<section class="rgroup" style="width:73px"><div class="rbody ps-2">
<div class="igrid"><button aria-label="矩形陣列"><svg><use href="#p1"/></svg></button><button aria-label="鏡射"><svg><use href="#p3"/></svg></button><button aria-label="複製元件"><svg><use href="#p5"/></svg></button><button aria-label="曲線陣列"><svg><use href="#p2"/></svg></button><button aria-label="同步陣列"><svg><use href="#p4"/></svg></button></div>
</div><div class="rlabel">陣列</div></section>

<section class="rlast flex-fill"><input class="finder d-block" aria-label="組態"><div class="d-flex ps-2"><div class="igrid"><button aria-label="組態設定"><svg><use href="#q1"/></svg></button></div><div class="igrid"><button aria-label="顯示設定"><svg><use href="#q2"/></svg></button></div></div></section>
</div>

<div class="qrow position-relative">
<div class="qbar d-flex align-items-center"><i class="grip"></i>
<button><svg><use href="#i-save"/></svg><span>儲存<span class="latin">(<u>S</u>)</span></span></button>
<button><svg><use href="#i-cuto"/></svg>除料</button>
<button><svg><use href="#i-dm"/></svg>設計管理器</button>
<button><svg><use href="#i-sa"/></svg><span>另存新檔<span class="latin">(<u>A</u>)</span></span></button>
<button><svg><use href="#i-re"/></svg>重組</button>
<button><svg><use href="#i-ins"/></svg>插入元件</button>
<button><svg><use href="#i-cb"/></svg>貼上</button>
<button><svg><use href="#i-prop"/></svg>性質</button>
</div>
<aside class="tip position-absolute" role="tooltip">
<div class="head d-flex"><svg width="38" height="30"><use href="#i-re2"/></svg><h2>重組</h2></div>
<p class="desc">選定組立件重組至一新組立件或一現有的組立件。</p>
<p class="f1">按 <span>F1</span> 獲取說明。</p>
</aside>
</div>
<div class="docs d-flex">
<div class="doctab d-flex align-items-center"><svg width="20" height="20"><use href="#i-doc"/></svg><a class="ms-1" href="#">IRB6660_130_310.asm</a><button class="ms-auto" aria-label="關閉"><svg width="12" height="12"><path d="M1 1l10 10M11 1L1 11" stroke="#1f4e96" stroke-width="2"/></svg></button></div>
</div>
</header>

<main class="work position-relative d-flex flex-column">
<svg class="model position-absolute" viewBox="520 250 450 480" role="img" aria-label="機械手臂模型">
<defs>
<linearGradient id="tube" x1="0" y1="0" x2=".35" y2="1"><stop offset="0" stop-color="#f07a00"/><stop offset=".28" stop-color="#ff8a05"/><stop offset=".42" stop-color="#ffe04c"/><stop offset=".54" stop-color="#ff8a05"/><stop offset="1" stop-color="#e06c00"/></linearGradient>
<linearGradient id="housing" gradientUnits="userSpaceOnUse" x1="150" y1="330" x2="195" y2="425"><stop offset="0" stop-color="#ff8500"/><stop offset=".15" stop-color="#ff8a05"/><stop offset=".35" stop-color="#ffd848"/><stop offset=".5" stop-color="#ff8a05"/><stop offset="1" stop-color="#f57a00"/></linearGradient>
</defs>
<g transform="translate(510 430) scale(.33333)" fill="#ff8500" stroke="#5e5e5e" stroke-width="4" stroke-linejoin="round">
<path d="M585-60h80V100l-10 150-30 150-100-50 5-70 20-130z"/>
<path d="M600-60l-2 155-30 150-20 100M590-40l-15 130-30 190M658-60l-5 155-10 150-22 125M600 50l60 5M600 65l60 5M598 90l57 6M552 325l70 30" fill="none" stroke-width="3"/>
<path d="M583-40l-33 190-20 190" fill="none" stroke-width="8" stroke-dasharray="8 3"/>
<path d="M388 372q5-30 45-58l58-20 8-28 15-4 15 14-4 72 40 25-80 35z"/><path d="M405 365q15-25 80-50M410 345l30 22M440 360l80-20" fill="none" stroke-width="3"/>
<path d="M61 665l130-6 55 40 50-5 230-10q50 20 54 60v65q-30 35-90 48L140 871z"/>
<path d="M115 780l130-5 25 55 210-8q70-5 100-55M110 670l25 110M93 665l42 110M195 660l35 80 35 85M115 670l50 5 35 70M105 740l100-5M150 780v20" fill="none" stroke-width="3"/>
<path d="M118 742l82-5 12 38-82 8z" fill="#fff"/><path d="M120 672l68 5 18 58-35 0q-50-30-51-63z"/>
<path d="M205 705l100 45M215 715l60 70M240 700l55 35" stroke-width="8" stroke-dasharray="14 5"/>
<path d="M260 770l85 20 15 25-90 2zM490 790l80-45 5 22-65 38-28-3zM230 735l60-18 20 30-60 10zM500 715l40-12 20 20-45 10z"/>
<path d="M268 780l70 18m155-5l65-38m-310-15l50-12m215 0l45-8" stroke-width="6" stroke-dasharray="12 5"/>
<ellipse cx="395" cy="735" rx="95" ry="30"/><path d="M345 738q30 16 90 8l-5 12q-50 10-85-8z" fill="#ffe34f" stroke="none"/>
<ellipse cx="400" cy="695" rx="104" ry="36" fill="#c6c6cc"/>
<path d="M262 620l20 75q50 25 110 24 100 0 115-40l18-15v-50z"/>
<path d="M290 655v40m15-35v40m15-35v42m15-38v40m15-36v38m50-36v38m22-38v36m20-38v32m20-34v28M262 640q60 30 145 28t110-30M300 655l90-8 110-5" fill="none"/>
<path d="M400 688h30v38h-30z" stroke-width="2"/><path d="M432 684h18v22h-18z" fill="#ffd43c" stroke="none"/>
<path d="M280 665v40" stroke="#222" stroke-width="7"/>
<path d="M255 595q10-25 60-27l100 20v60q-80 10-145 3-20-25-15-56z" fill="#ff7a00"/><path d="M255 610q80 10 150-30M320 655l85-8" fill="none" stroke-width="3"/>
<path d="M272 460q30-20 80 0l12 110-60 18-30-10z"/><path d="M282 465v110m8-110v110m14-112v120m45-105v95M272 462q40 20 80 0" fill="none" stroke-width="5"/><ellipse cx="308" cy="458" rx="16" ry="8"/>
<path d="M350 545h55v40h-55z"/><path d="M363 505l27 35h-27z" fill="#fff"/><path d="M350 595l55-10v22l-50-2z" fill="#ff6a3a"/><path d="M350 560l55-15m-50 35l50-15" stroke-width="4"/>
<path d="M302 400q5-16 30-18l180-20q60 0 110 50 22 40 20 75l-40 160-20 4-165-8-6-70q-15-60-85-110-25-15-24-63z"/>
<path d="M325 385q-10 20 0 32l185-30q60-5 105 45 20 40 10 90l-38 122M520 362v35M330 405l105-15M405 580v60M318 440l78 90 15 100" fill="none" stroke-width="3"/>
<path d="M310 415q10-12 35 2l15 20-15 20q-35-10-35-42z"/><ellipse cx="347" cy="440" rx="18" ry="19"/><ellipse cx="347" cy="440" rx="10" ry="10" fill="#a86526"/>
<path d="M310 415l25 5-15 12z" fill="#ffe24b" stroke="none"/>
<ellipse cx="528" cy="492" rx="101" ry="93"/><ellipse cx="528" cy="492" rx="91" ry="83" stroke-width="8" stroke-dasharray="12 5"/><ellipse cx="528" cy="492" rx="80" ry="74"/>
<path d="M610 460q8 60-38 94l-8-20q38-25 28-70z" fill="#ffd040" stroke="none"/>
<circle cx="527" cy="425" r="7" fill="#666"/><circle cx="460" cy="472" r="7" fill="#666"/><circle cx="588" cy="457" r="6"/>
<ellipse cx="530" cy="496" rx="56" ry="50"/><path d="M500 465l55-8 14 40-60 15-20-10zM485 475l18 55m10-62l6 35m12-38l6 30" stroke-width="5"/>
<circle cx="543" cy="538" r="37"/><circle cx="543" cy="538" r="16" stroke-width="3"/>
<path d="M495 592q20-8 55 0 10 16-5 25-30 10-48-4-6-12-2-21z" stroke-width="7"/><path d="M508 603q18-8 32 2l-6 10h-22z"/>
<g fill="#666" stroke="none"><circle cx="370" cy="680" r="6"/><circle cx="455" cy="672" r="6"/><circle cx="400" cy="777" r="6"/><circle cx="415" cy="820" r="6"/><circle cx="155" cy="840" r="3"/><circle cx="192" cy="812" r="3"/><circle cx="115" cy="715" r="3"/><circle cx="322" cy="852" r="5"/></g>
</g>
<g transform="translate(630 250) scale(.33333)" fill="#ff8500" stroke="#5e5e5e" stroke-width="4" stroke-linejoin="round">
<path d="M100 480L40 515q-15 20 0 50 15 25 40 20l25-15 60-55 55-20 15-30h68l0-80-130 55z"/>
<path d="M45 550q0-30 20-35l70-25M90 580l75-70M100 490l55 5 65-20 15-35M155 495l50-10" fill="none" stroke-width="3"/>
<circle cx="65" cy="560" r="17" stroke-width="7"/><circle cx="68" cy="562" r="6"/>
<path d="M240 470l10-30 50-60 5 85v30h-65z" stroke="none"/><path d="M285 388l15 70 5 40" fill="none"/>
<path d="M192 458l48-20 6 12-42 24z" stroke-width="7"/><path d="M242 480q10-28 40-22 25 10 15 45l-25 8q-28-5-30-31z"/><circle cx="274" cy="485" r="22" stroke-width="7"/><path d="M262 480h20v16h-20z"/>
<path d="M265 290l160-58 30 78-20 0-135 63z" fill="url(#tube)"/>
<path d="M285 310l130-50m-120 90l60-20M310 285l22 75M385 255l28 70m-15-78l28 72M380 300l25-10 10 20-25 10z" fill="none" stroke-width="3"/><path d="M318 325l53-21 5 20-53 17z" fill="#000"/>
<path d="M62 312l25-2 15 20 28 3 8 20 58-23-3-28 10-4 10 25 38-30 16 0 35 85-12 10-135 52-10 28-45 22L45 350z" fill="url(#housing)"/>
<path d="M50 340l58 145M65 335l60 145M78 325l62 150M95 335l50 115" fill="none" stroke-width="5"/><path d="M85 350q20 50 25 80" stroke="#ffe45a" stroke-width="6" fill="none"/>
<path d="M110 340l20 30 130-48M190 300l15 40M200 300l15 32M120 335l14 30" fill="none"/><path d="M250 290l38 95m-26-95l35 85" fill="none" stroke-width="6"/>
<path d="M140 475l15-30-15-15-18 10" fill="none"/>
<path d="M465 228l143-80 40 72-160 66z" fill="url(#tube)"/><path d="M480 232l100-50 15 40-105 45zM500 250l80-35M575 170l28 65" fill="none" stroke-width="3"/>
<path d="M425 217q10-10 25-7l15 14 22 74q-10 14-27 12z"/><path d="M432 215l32 92M442 212l34 92M455 215l28 82" fill="none" stroke-width="5"/>
<path d="M608 140l20-5 27-10 10-25 35-10 25-5 25-13 80-34q30-3 50 27l-5 105-45 14-50 20h-55l-25 12-37 4-15 10z"/>
<path d="M608 145l38 85M618 140l40 88" fill="none" stroke-width="6"/><path d="M612 160l30-15 14 40-20 8z" fill="#ffcf38" stroke="none" opacity=".7"/>
<path d="M665 105l15 60m-20-10l50-15M670 170q-10 35 15 35h30M680 130l25-8M690 165l25-10" fill="none"/>
<path d="M703 95v75q5 35 60 32 30-5 110-35M712 90v78q8 30 60 25M718 90l50-20 80-25q22-2 25 25" fill="none" stroke-width="4"/>
<path d="M730 90q15-15 25 0l-12 25zM730 145l10 15" fill="#6a6022" stroke-width="6"/><path d="M725 180q-8-25 30-40l30-15 12 50q-30 20-72 5zM785 130l10 45" fill="none"/>
<path d="M930 140l40 20 4 10 17 12-2 8-25-4-47-18z" fill="#aaa"/><path d="M955 155l-8 25M970 162l-6 22" fill="none"/>
<path d="M768 90q-2-40 27-45l15 7q18-22 40 8 18-8 25 15 20-3 30 25 25-5 28 14l-8 46q-10 10-25 12-8 20-25 3l-15-12q-20 4-30-18l-20-17q-18 14-35 0z" fill="#00ff4c" stroke="#00ff4c"/>
</g>
</svg>

<div class="cmd position-absolute" role="toolbar">
<button class="act" aria-label="選項"><svg><use href="#k1"/></svg></button><button aria-label="複本"><svg><use href="#k2"/></svg></button><button aria-label="新增元件"><svg><use href="#k3"/></svg></button><button class="warm" aria-label="選取元件"><svg><use href="#k4"/></svg></button><button aria-label="清單"><svg><use href="#k5"/></svg></button><button class="split" aria-label="拔模"><svg><use href="#k6"/></svg><b class="tri"></b></button><button class="split" aria-label="延伸"><svg><use href="#k7"/></svg><b class="tri"></b></button><button class="split" aria-label="關鍵點"><svg><use href="#k8"/></svg><b class="tri"></b></button>
</div>

<div class="pane">
<div class="bar"><i></i></div>
<input class="find d-block" placeholder="用以搜尋元件的類型" aria-label="用以搜尋元件的類型">
<ul class="tree">
<li><span class="tag root"><svg><use href="#t-asm"/></svg><svg class="lk"><use href="#t-lock"/></svg>IRB6660_130_310.asm</span></li>
<li><button class="exp plus" aria-label="展開"></button><input type="checkbox" id="n1"><label class="tag cj" for="n1"><svg><use href="#t-sec"/></svg>剖視圖</label></li>
<li><button class="exp" aria-label="收合"></button><input type="checkbox" id="n2"><label class="tag cj" for="n2"><svg><use href="#t-cs"/></svg>座標系</label></li>
<li><i class="noexp deep"></i><input type="checkbox" id="n3"><label class="tag cj" for="n3"><svg><use href="#t-cs"/></svg><span class="latin">Base</span></label></li>
<li><button class="exp plus" aria-label="展開"></button><input type="checkbox" id="n4"><label class="tag cj" for="n4"><svg><use href="#t-pl"/></svg>參照平面</label></li>
<li><i class="noexp"></i><input type="checkbox" id="n5" checked><label class="tag" for="n5"><svg><use href="#t-base"/></svg><svg class="lk"><use href="#t-lock"/></svg>IRB6660_130_310__01_BASE.par:1</label></li>
<li><i class="noexp"></i><input type="checkbox" id="n6" checked><label class="tag" for="n6"><svg><use href="#t-part"/></svg><svg class="lk"><use href="#t-lock"/></svg>IRB6660_130_310__01_LINK4.par:1</label></li>
<li><i class="noexp"></i><input type="checkbox" id="n7" checked><label class="tag sel" for="n7"><svg><use href="#t-psel"/></svg><svg class="lk"><use href="#t-lock"/></svg>IRB6660_130_310__01_LINK5.par:1</label></li>
<li><i class="noexp"></i><input type="checkbox" id="n8" checked><label class="tag sel" for="n8"><svg><use href="#t-psel"/></svg><svg class="lk"><use href="#t-lock"/></svg>IRB6660_130_310__01_LINK6.par:1</label></li>
<li><button class="exp plus" aria-label="展開"></button><input type="checkbox" id="n9" checked><label class="tag" for="n9"><svg><use href="#t-asm"/></svg><svg class="lk"><use href="#t-lock"/></svg>SCA2-00-50B-50.asm:1</label></li>
<li><button class="exp plus" aria-label="展開"></button><input type="checkbox" id="n10" checked><label class="tag" for="n10"><svg><use href="#t-asb"/></svg><svg class="lk"><use href="#t-lock"/></svg>arm.asm:1</label></li>
</ul>
</div>
<div class="status mt-auto"><i></i><output>已選取多個項。</output></div>
</main>
<script src="https://cdn.jsdelivr.net/npm/bootstrap@5.3.0/dist/js/bootstrap.bundle.min.js"></script>
</body>
</html>
